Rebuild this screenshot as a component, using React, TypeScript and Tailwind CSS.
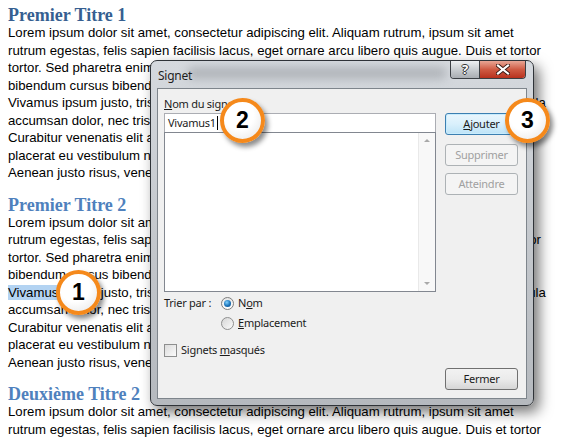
import React from "react";

const paragraph = [
  "Lorem ipsum dolor sit amet, consectetur adipiscing elit. Aliquam rutrum, ipsum sit amet",
  "rutrum egestas, felis sapien facilisis lacus, eget ornare arcu libero quis augue. Duis et tortor",
  "tortor. Sed pharetra enim in lacus pulvinar at porta nulla aliquam. Nunc tincidunt eros",
  "bibendum cursus bibendum. Pellentesque vitae nunc massa, quis vestibulum lorem. Sed",
  "Vivamus ipsum justo, tristique eu pellentesque sed, tincidunt sit amet lectus. Donec vehicula",
  "accumsan dolor, nec tristique nisl faucibus in. Praesent ut neque lorem, tempor vitae eros.",
  "Curabitur venenatis elit a quam varius in consectetur enim pretium. Nullam sed metus",
  "placerat eu vestibulum nunc ultrices. Cras id mi est, eget tempus sem. Nulla facilisi",
  "Aenean justo risus, venenatis at laoreet vitae, dignissim eget tellus.",
];

function Heading({ children, dark }: { children: React.ReactNode; dark?: boolean }) {
  return (
    <div
      className={`h-[18px] leading-[18px] text-[18px] font-bold whitespace-nowrap ${
        dark ? "text-[#365f91]" : "text-[#4f81bd]"
      }`}
      style={{ fontFamily: '"Liberation Serif", serif' }}
    >
      {children}
    </div>
  );
}

function Paragraph({ lines, highlight }: { lines: string[]; highlight?: boolean }) {
  return (
    <div>
      {lines.map((line, i) => (
        <div key={i} className="h-[17.5px] leading-[17.5px] whitespace-nowrap">
          {highlight && i === 4 ? (
            <>
              <span className="bg-[#b3d3f2]">Vivamus </span>
              {line.slice(8)}
            </>
          ) : (
            line
          )}
        </div>
      ))}
    </div>
  );
}

function Marker({ n, className }: { n: number; className: string }) {
  return (
    <div
      className={`absolute w-[45px] h-[45px] rounded-full border-[4px] border-[#f5891b] bg-[radial-gradient(circle_at_40%_35%,#ffffff_45%,#e4e4e4)] shadow-[3px_4px_5px_rgba(0,0,0,0.45)] flex items-center justify-center text-[23px] font-bold text-black ${className}`}
      style={{ fontFamily: '"Liberation Sans", Arial, sans-serif' }}
    >
      {n}
    </div>
  );
}

function WinButton({
  children,
  variant = "normal",
  className = "",
}: {
  children: React.ReactNode;
  variant?: "normal" | "default" | "disabled";
  className?: string;
}) {
  const styles = {
    normal:
      "border-[#707070] bg-gradient-to-b from-[#f2f2f2] via-[#ebebeb] to-[#d6d6d6] text-[#1b1b1b]",
    default:
      "border-[#3c7fb1] bg-gradient-to-b from-[#eaf6fd] via-[#d9f0fc] to-[#bde3f7] text-[#1b1b1b] shadow-[inset_0_0_0_1px_#c8ecfd]",
    disabled: "border-[#adb2b5] bg-[#f4f4f4] text-[#a0a0a0]",
  };
  return (
    <div
      className={`h-[22px] w-[73px] rounded-[3px] border flex items-center justify-center ${styles[variant]} ${className}`}
    >
      {children}
    </div>
  );
}

function Dialog() {
  return (
    <div
      className="absolute left-[150px] top-[60px] w-[384px] h-[346px] rounded-[7px] border border-[#2f3338] bg-gradient-to-b from-[#d5d9de] via-[#c4c8cd] to-[#b5b9be] shadow-[5px_6px_14px_rgba(0,0,0,0.55)] px-[6px] pb-[6px] flex flex-col text-[11px] tracking-[-0.25px] text-[#1b1b1b]"
      style={{ fontFamily: '"Noto Sans", "Open Sans", sans-serif' }}
    >
      {/* title bar */}
      <div className="relative h-[27px] flex items-start overflow-hidden">
        <div className="absolute left-[30px] top-[6px] w-[260px] h-[12px] rounded-full bg-[#8e9297] opacity-50 blur-[5px]" />
        <div className="relative pl-[1px] pt-[6px] text-[12px] text-[#1e1e1e]">Signet</div>
        <div className="relative ml-auto mr-[1px] flex h-[18px] rounded-b-[4px] border border-t-0 border-[#3b3f44] overflow-hidden">
          <div className="w-[28px] bg-gradient-to-b from-[#eef0f2] via-[#c9cdd1] to-[#a9adb2] flex items-center justify-center text-[13px] font-bold text-white [text-shadow:1px_0_0_#333,-1px_0_0_#333,0_1px_0_#333,0_-1px_0_#333]">
            ?
          </div>
          <div className="w-[46px] border-l border-[#3b3f44] bg-gradient-to-b from-[#e8a595] via-[#cf5a43] to-[#b8301d] flex items-center justify-center">
            <svg width="14" height="11" viewBox="0 0 14 11">
              <path d="M2 1.5 L12 9.5 M12 1.5 L2 9.5" stroke="#3a1a14" strokeWidth="4" strokeLinecap="square" />
              <path d="M2 1.5 L12 9.5 M12 1.5 L2 9.5" stroke="#ffffff" strokeWidth="2.2" strokeLinecap="square" />
            </svg>
          </div>
        </div>
      </div>

      {/* client area */}
      <div className="flex-1 border border-[#7e858c] bg-[#f0f0f0] pl-[6px] pr-[8px] pt-[7px] pb-[8px] flex">
        <div className="w-[272px] flex flex-col">
          <div className="h-[16px] leading-[16px]">
            <span className="underline">N</span>om du signet :
          </div>
          <div className="mt-px h-[20px] border border-[#abadb3] bg-white flex items-center pl-[3px]">
            Vivamus1<span className="ml-px inline-block w-px h-[14px] bg-black" />
          </div>
          <div className="-mt-px h-[160px] border border-[#828790] bg-white flex justify-end">
            <div className="w-[17px] border-l border-[#e9e9e9] bg-[#f8f8f8] flex flex-col items-center justify-between py-[6px]">
              <div className="w-0 h-0 border-l-[3px] border-r-[3px] border-b-[3px] border-l-transparent border-r-transparent border-b-[#a9a9a9]" />
              <div className="w-0 h-0 border-l-[3px] border-r-[3px] border-t-[3px] border-l-transparent border-r-transparent border-t-[#a9a9a9]" />
            </div>
          </div>
          <div className="mt-[3px] flex">
            <div className="w-[57px] h-[16px] leading-[16px] whitespace-nowrap">Trier par :</div>
            <div className="flex flex-col gap-[4px]">
              <div className="flex items-center h-[16px] gap-[4px]">
                <div className="w-[13px] h-[13px] rounded-full border border-[#7d7d7d] bg-gradient-to-b from-[#e6e6e6] to-[#ffffff] flex items-center justify-center">
                  <div className="w-[7px] h-[7px] rounded-full bg-[radial-gradient(circle_at_40%_35%,#7fd0ff,#1a72b8_55%,#0c4a86)]" />
                </div>
                <span className="leading-[16px]">
                  N<span className="underline">o</span>m
                </span>
              </div>
              <div className="flex items-center h-[16px] gap-[4px]">
                <div className="w-[13px] h-[13px] rounded-full border border-[#8e8f8f] bg-gradient-to-br from-[#d6d6d6] to-[#fbfbfb]" />
                <span className="leading-[16px]">
                  <span className="underline">E</span>mplacement
                </span>
              </div>
            </div>
          </div>
          <div className="mt-[11px] h-[16px] flex items-center gap-[4px]">
            <div className="w-[13px] h-[13px] border border-[#8e8f8f] bg-gradient-to-br from-[#dcdcdc] to-[#fbfbfb]" />
            <span className="leading-[16px]">
              Signets <span className="underline">m</span>asqués
            </span>
          </div>
        </div>
        <div className="ml-[9px] mt-[17px] flex flex-col">
          <WinButton variant="default">
            <span>
              <span className="underline">A</span>jouter
            </span>
          </WinButton>
          <WinButton variant="disabled" className="mt-[9px]">
            Supprimer
          </WinButton>
          <WinButton variant="disabled" className="mt-[7px]">
            Atteindre
          </WinButton>
          <WinButton className="mt-auto">Fermer</WinButton>
        </div>
      </div>
    </div>
  );
}

export default function App() {
  return (
    <div className="relative w-[563px] h-[443px] overflow-hidden bg-white">
      <div
        className="pl-[8px] pt-[6px] text-[13.2px] text-black"
        style={{ fontFamily: '"Liberation Sans", Arial, sans-serif' }}
      >
        <Heading dark>Premier Titre 1</Heading>
        <Paragraph lines={paragraph} />
        <div className="mt-[14px]">
          <Heading>Premier Titre 2</Heading>
        </div>
        <Paragraph lines={paragraph} highlight />
        <div className="mt-[14px]">
          <Heading>Deuxième Titre 2</Heading>
        </div>
        <Paragraph lines={paragraph.slice(0, 2)} />
      </div>

      <Dialog />

      <Marker n={1} className="left-[56px] top-[270px]" />
      <Marker n={2} className="left-[220px] top-[98px]" />
      <Marker n={3} className="left-[505px] top-[98px]" />
    </div>
  );
}
